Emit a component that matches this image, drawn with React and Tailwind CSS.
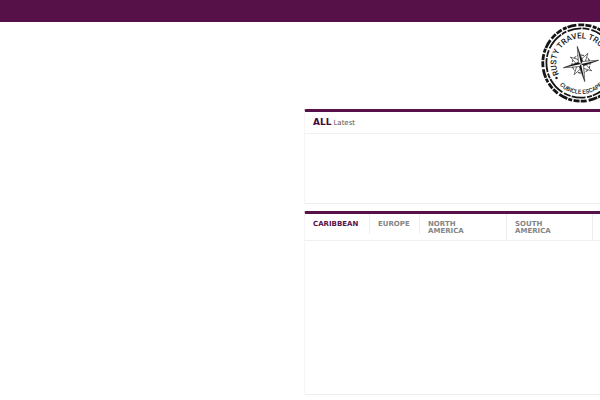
import React from "react";

const regions = [
  { name: "CARIBBEAN", active: true, style: "h-5 w-[65px] px-2" },
  { name: "EUROPE", style: "h-5 w-[50px] px-2" },
  { name: "NORTH AMERICA", style: "w-[87px] pl-2 pr-6" },
  { name: "SOUTH AMERICA", style: "w-[86px] pl-2 pr-6" },
];

function Logo() {
  return (
    <svg viewBox="-40 -40 80 80" className="block h-20 w-20 shrink-0 font-['Roboto',sans-serif]" role="img" aria-label="Rusty Travel Trombone">
      <g fill="none" stroke="#161616">
        <circle r="38.2" strokeWidth="2.8" strokeDasharray="6 1.5 4 1 9 2 6 1.2" />
        <circle r="34.6" strokeWidth="1.8" strokeDasharray="14 1.2 7 2 18 1 5 1.5" />
      </g>
      <path id="upper" d="M -22 11.5 A 24.8 24.8 0 1 1 22 11.5" fill="none" />
      <path id="lower" d="M -31 0 A 31 31 0 0 0 31 0" fill="none" />
      <text fontSize="8" fontWeight="500" fill="#161616">
        <textPath href="#upper">RUSTY TRAVEL TROMBO</textPath>
      </text>
      <text fontSize="6" fontWeight="500" fill="#161616" textAnchor="middle">
        <textPath href="#lower" startOffset="50%">CUBICLE ESCAPE</textPath>
      </text>
      <circle cx="-24.5" cy="15" r="1.2" fill="#161616" />
      <circle cx="24.5" cy="15" r="1.2" fill="#161616" />
      <g transform="translate(0 1) rotate(-12)">
        <circle r="9" fill="none" stroke="#444" strokeWidth="1" strokeDasharray="3 1" />
        <g fill="#fff" stroke="#222" strokeWidth="0.6">
          <path d="M0 0 L2 -5 L9 -9 L5 -2 L5 2 L9 9 L2 5 L-2 5 L-9 9 L-5 2 L-5 -2 L-9 -9 L-2 -5Z" />
          <path d="M0 -18 L2.2 -2.2 L18 0 L2.2 2.2 L0 18 L-2.2 2.2 L-18 0 L-2.2 -2.2Z" />
        </g>
        <path fill="#161616" d="M0 0V-18L2.2 -2.2ZM0 0H18L2.2 2.2ZM0 0V18L-2.2 2.2ZM0 0H-18L-2.2 -2.2Z" />
      </g>
    </svg>
  );
}

export default function App() {
  return (
    <div className="min-h-screen overflow-hidden bg-white font-['DejaVu_Sans',sans-serif]">
      <div className="h-[22px] bg-[#571149]" />
      <div className="ml-[304px]">
        <header className="flex overflow-hidden pt-px pb-[6px] pl-[237px]">
          <Logo />
        </header>
        <main className="flex flex-col gap-[7px]">
          <section className="rounded-l-xs border-t-3 border-b border-l border-t-[#571149] border-b-[#eeeeee] border-l-[#f5f5f5]">
            <h2 className="flex items-baseline gap-[2px] border-b border-[#f0f0f0] px-2 py-1 text-[9px] leading-[13px] font-bold text-[#430b3a]">
              ALL <span className="text-[7px] leading-[7px] font-normal text-[#555555]">Latest</span>
            </h2>
            <div className="h-[69px]" />
          </section>
          <section className="rounded-l-xs border-t-3 border-b border-l border-t-[#571149] border-b-[#eeeeee] border-l-[#f5f5f5]">
            <nav className="flex items-start overflow-hidden border-b border-[#f0f0f0] text-[7px] leading-[7px] font-bold">
              {regions.map((region) => (
                <a
                  key={region.name}
                  href="#"
                  className={`block shrink-0 border-r border-[#eeeeee] pt-[7px] pb-[5px] ${region.style} ${region.active ? "text-[#571149]" : "text-[#858585]"}`}
                >
                  {region.name}
                </a>
              ))}
            </nav>
            <div className="h-[153px]" />
          </section>
        </main>
      </div>
    </div>
  );
}
